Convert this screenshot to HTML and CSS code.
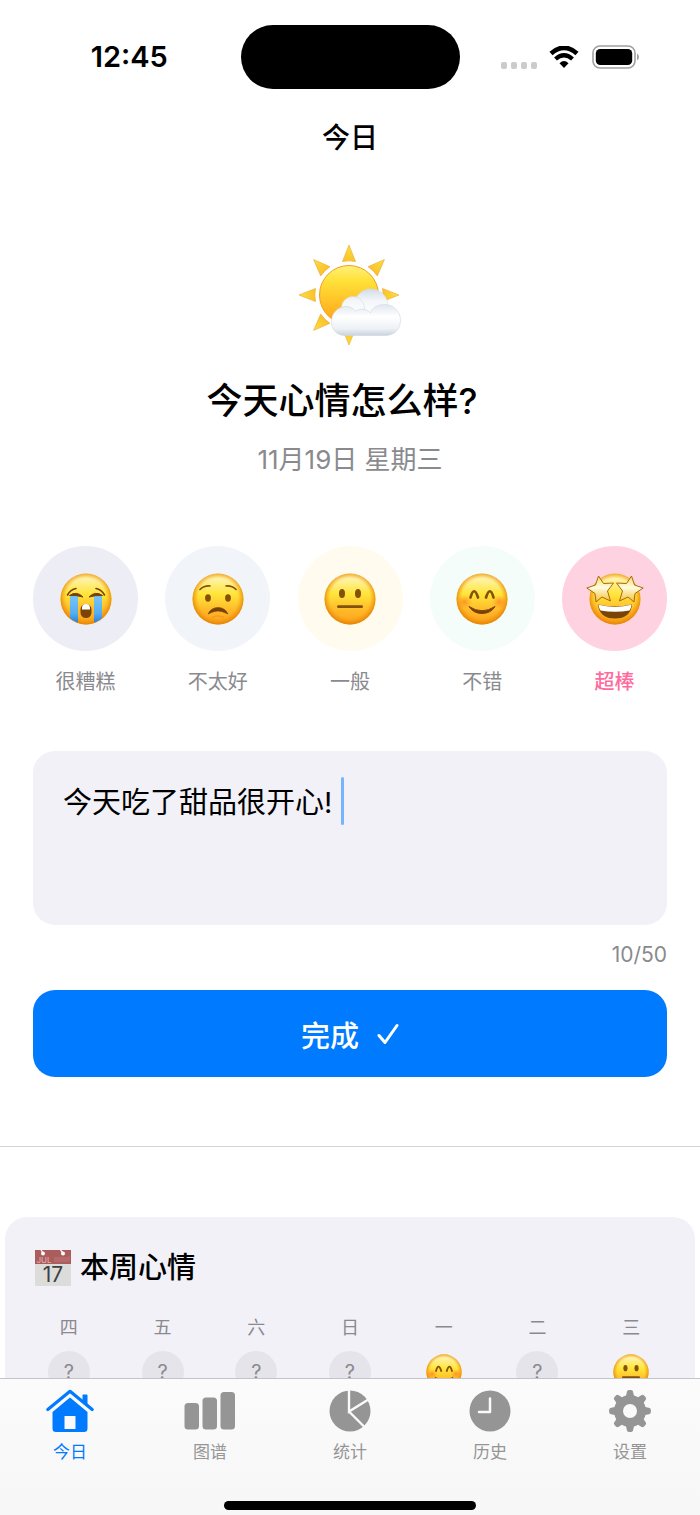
FILE: index.html
```html
<!DOCTYPE html>
<html lang="zh-CN">
<head>
<meta charset="utf-8">
<meta name="viewport" content="width=device-width, initial-scale=1">
<title>今日</title>
<link rel="stylesheet" href="styles.css">
</head>
<body>
<svg class="defs" width="0" height="0" aria-hidden="true">
  <defs>
    <linearGradient id="skin" x1="0" y1="0" x2="0" y2="1">
      <stop offset="0" stop-color="#ffe680"/><stop offset=".1" stop-color="#fff3a8"/><stop offset=".4" stop-color="#ffe53a"/><stop offset=".75" stop-color="#ffb627"/><stop offset="1" stop-color="#fba31c"/>
    </linearGradient>
    <radialGradient id="rim" cx=".5" cy=".48" r=".52">
      <stop offset=".74" stop-color="#f59a10" stop-opacity="0"/><stop offset="1" stop-color="#e38104" stop-opacity=".95"/>
    </radialGradient>
    <radialGradient id="cheek"><stop offset="0" stop-color="#ff6a1c" stop-opacity=".6"/><stop offset="1" stop-color="#ff7a1c" stop-opacity="0"/></radialGradient>
    <linearGradient id="tear" x1="0" y1="0" x2="0" y2="1"><stop offset="0" stop-color="#76c4f7"/><stop offset=".6" stop-color="#55aef0"/><stop offset="1" stop-color="#1d75d6"/></linearGradient>
    <linearGradient id="star" x1="0" y1="0" x2="0" y2="1"><stop offset="0" stop-color="#f6dc62"/><stop offset=".45" stop-color="#fffbe0"/><stop offset="1" stop-color="#f2c02e"/></linearGradient>
    <linearGradient id="sun" x1="0" y1="0" x2="0" y2="1"><stop offset="0" stop-color="#fff07a"/><stop offset=".25" stop-color="#ffe23a"/><stop offset="1" stop-color="#ff9f14"/></linearGradient>
    <linearGradient id="ray" gradientUnits="userSpaceOnUse" x1="51" y1="0" x2="51" y2="18"><stop offset="0" stop-color="#fbe23e"/><stop offset="1" stop-color="#fac02a"/></linearGradient>
    <linearGradient id="cloud" gradientUnits="userSpaceOnUse" x1="0" y1="62" x2="0" y2="92"><stop offset="0" stop-color="#e4eaf1"/><stop offset=".35" stop-color="#fff"/><stop offset=".75" stop-color="#eef2f6"/><stop offset="1" stop-color="#c6d0dc"/></linearGradient>
    <linearGradient id="cloud-back" gradientUnits="userSpaceOnUse" x1="0" y1="44" x2="0" y2="76"><stop offset="0" stop-color="#cfdae6"/><stop offset=".4" stop-color="#f4f7fa"/><stop offset="1" stop-color="#fff"/></linearGradient>
    <clipPath id="face-clip"><circle cx="26" cy="26" r="25"/></clipPath>
    <symbol id="face" viewBox="0 0 52 52"><circle cx="26" cy="26" r="25.500" fill="url(#skin)"/><circle cx="26" cy="26" r="25.500" fill="url(#rim)"/></symbol>
    <symbol id="cry" viewBox="0 0 52 52">
      <use href="#face"/>
      <g clip-path="url(#face-clip)"><path d="M10 23h8v29h-8zM34 23h8v29h-8z" fill="url(#tear)"/></g>
      <g fill="none" stroke="#79410a" stroke-linecap="round"><path d="M7.500 22Q10.500 16.500 16 15.500M44.500 22Q41.500 16.500 36 15.500" stroke-width="1.600"/></g>
      <path d="M9.500 22.500Q16.500 17.500 23 24Q16.500 22 9.500 22.500ZM42.500 22.500Q35.500 17.500 29 24Q35.500 22 42.500 22.500Z" fill="#79410a" stroke="#79410a" stroke-linejoin="round"/>
      <rect x="20.500" y="31" width="11" height="14" rx="5.500" fill="#7a4407"/><path d="M22 36.500V35a4 4 0 0 1 8 0v1.500z" fill="#fff"/>
    </symbol>
    <symbol id="worried" viewBox="0 0 52 52">
      <use href="#face"/>
      <ellipse cx="16" cy="25" rx="2.900" ry="3.700" fill="#855008"/><ellipse cx="36" cy="25" rx="2.900" ry="3.700" fill="#855008"/>
      <path d="M8 16.500Q12 12.500 18 13M44 16.500Q40 12.500 34 13" fill="none" stroke="#855008" stroke-width="1.700" stroke-linecap="round"/>
      <path d="M16 41Q19 34.500 26 34.500T36 41Q30 38 26 38T16 41Z" fill="#79410a" stroke="#79410a" stroke-width=".6" stroke-linejoin="round"/>
      <path d="M20 44.500Q26 41.500 32 44.500" fill="none" stroke="#f59a22" stroke-width="1.500"/>
    </symbol>
    <symbol id="neutral" viewBox="0 0 52 52">
      <use href="#face"/>
      <ellipse cx="18" cy="20.500" rx="3" ry="4.500" fill="#855008"/><ellipse cx="34" cy="20.500" rx="3" ry="4.500" fill="#855008"/>
      <rect x="13" y="32.300" width="26" height="2.800" rx="1.400" fill="#855008"/>
    </symbol>
    <symbol id="smile" viewBox="0 0 52 52">
      <use href="#face"/>
      <ellipse cx="8.500" cy="29" rx="8" ry="7" fill="url(#cheek)"/><ellipse cx="43.500" cy="29" rx="8" ry="7" fill="url(#cheek)"/>
      <path d="M14.500 24.500Q18 12 22 24.500M30 24.500Q34 12 37.500 24.500" fill="none" stroke="#855008" stroke-width="2.700" stroke-linecap="round"/>
      <path d="M13 33.500Q26 42 39 33.500Q34.500 40.500 26 40.500T13 33.500Z" fill="#79410a" stroke="#79410a" stroke-linejoin="round"/>
    </symbol>
    <symbol id="starry" viewBox="0 0 58 52">
      <use href="#face" x="3" width="52" height="52"/>
      <path d="M12 31.500Q29 35.500 46 31.500Q44.500 45.500 29 45.500T12 31.500Z" fill="#7a4407"/>
      <path d="M12.500 31.800Q29 36 45.500 31.800Q45 36 43.500 37.500Q29 40 14.500 37.500Q13 36 12.500 31.800Z" fill="#fff"/>
      <g fill="url(#star)" stroke="#a9690c" stroke-linejoin="round"><path d="M12.500 3L17.500 10.500L27.500 10L21.500 18L24.500 28L16 24L10 29L9 20.500L.8 15L9.500 12Z"/><path d="M45.500 3L40.500 10.500L30.500 10L36.500 18L33.500 28L42 24L48 29L49 20.500L57.200 15L48.500 12Z"/></g>
    </symbol>
    <path id="sunray" d="M51 1L57.500 17.500Q51 16.200 44.500 17.500Z" fill="url(#ray)" stroke="#eeb03a" stroke-width=".7" stroke-linejoin="round"/>
    <path id="tooth" d="M17.800 7.500L18.900 2.300Q19.100 1.200 20 1.200h2Q22.900 1.200 23.100 2.300L24.200 7.500Z" stroke-width="2.200" stroke-linejoin="round"/>
  </defs>
</svg>

<div class="app">
  <header class="top">
    <div class="status">
      <time class="clock">12:45</time>
      <div class="island"></div>
      <div class="signals">
        <span class="dots"><i></i><i></i><i></i><i></i></span>
        <svg class="wifi" viewBox="0 0 30 22" role="img" aria-label="Wi-Fi"><path d="M2 7.500Q15-4 28 7.500" fill="none" stroke="#000" stroke-width="4.600"/><path d="M6.500 13Q15 5.500 23.500 13" fill="none" stroke="#000" stroke-width="4.200"/><path d="M10.500 17.200Q15 13 19.500 17.200L15 22Z"/></svg>
        <svg class="battery" viewBox="0 0 48 24" role="img" aria-label="电量"><rect x="1" y="1" width="42" height="22" rx="7" fill="none" stroke="#a0a0a0" stroke-width="1.600"/><rect x="3.800" y="4" width="36.400" height="16" rx="4.500"/><path d="M45 8.500q2 1 2 3.500t-2 3.500z" fill="#a0a0a0"/></svg>
      </div>
    </div>
    <h1 class="title">今日</h1>
  </header>

  <main class="content">
    <section class="hero">
      <svg class="weather" viewBox="0 0 104 104" role="img" aria-label="晴间多云">
        <use href="#sunray"/><use href="#sunray" transform="rotate(45 51 51)"/><use href="#sunray" transform="rotate(90 51 51)"/><use href="#sunray" transform="rotate(180 51 51)"/><use href="#sunray" transform="rotate(225 51 51)"/><use href="#sunray" transform="rotate(270 51 51)"/><use href="#sunray" transform="rotate(315 51 51)"/>
        <circle cx="51" cy="51" r="29.500" fill="url(#sun)" stroke="#f0a01c"/>
        <g fill="url(#cloud-back)" stroke="#d3dce6" stroke-width=".6"><circle cx="73" cy="62" r="17"/><circle cx="55" cy="64" r="11.500"/></g>
        <path d="M47 91.500C38 91.500 33.500 85 33.500 77.500C33.500 69 40 62.500 48 62.500C52 62.500 55 64 57.500 67C63 64 69 65 72.500 69C74 63.500 80 60.500 86 60.500C96 60.500 102.500 67.500 102.500 76.500C102.500 85.500 96 91.500 87 91.500Z" fill="url(#cloud)" stroke="#cdd6e0" stroke-width=".6"/>
      </svg>
      <h2 class="question">今天心情怎么样?</h2>
      <p class="date">11月19日 星期三</p>
    </section>

    <section class="moods" aria-label="心情">
      <button class="mood" type="button"><span class="disc awful"><svg class="emoji"><use href="#cry"/></svg></span>很糟糕</button>
      <button class="mood" type="button"><span class="disc bad"><svg class="emoji"><use href="#worried"/></svg></span>不太好</button>
      <button class="mood" type="button"><span class="disc okay"><svg class="emoji"><use href="#neutral"/></svg></span>一般</button>
      <button class="mood" type="button"><span class="disc good"><svg class="emoji"><use href="#smile"/></svg></span>不错</button>
      <button class="mood selected" type="button" aria-pressed="true"><span class="disc great"><svg class="emoji wide"><use href="#starry"/></svg></span>超棒</button>
    </section>

    <form class="entry">
      <div class="note">
        <textarea class="note-text" aria-label="心情记录" maxlength="50">今天吃了甜品很开心!</textarea>
        <span class="caret" aria-hidden="true"></span>
      </div>
      <p class="counter">10/50</p>
      <button class="submit" type="button">完成
        <svg class="check" viewBox="0 0 22 22" aria-hidden="true"><path d="M2 12.500L8 19.500L20 2.500" fill="none" stroke="#fff" stroke-width="3" stroke-linecap="round" stroke-linejoin="round"/></svg>
      </button>
    </form>

    <section class="week">
      <h3 class="week-title">
        <svg class="calendar" viewBox="0 0 36 36" aria-hidden="true"><path d="M0 0h36v36H0z" fill="#dcdcdb"/><path d="M0 0h36v14H0z" fill="#ab5c5c"/><circle cx="8" cy="3.500" r="2" fill="#fff"/><circle cx="28" cy="3.500" r="2" fill="#fff"/><path d="M8 3L6 0M28 3L25.500 0" stroke="#fff" stroke-width="1.200"/><path d="M20 7v5M22 7v5M24 7v5M26 7v5M28 7v5M30 7v5M32 7v5M34 6v5" stroke="#c48584" stroke-width=".7"/><text class="cal-month" x="1.500" y="12.500">JUL</text><text class="cal-day" x="18" y="32">17</text></svg>
        本周心情
      </h3>
      <ol class="days">
        <li class="day">四<span class="blank">?</span></li>
        <li class="day">五<span class="blank">?</span></li>
        <li class="day">六<span class="blank">?</span></li>
        <li class="day">日<span class="blank">?</span></li>
        <li class="day">一<span class="logged"><svg class="mini"><use href="#smile"/></svg></span></li>
        <li class="day">二<span class="blank">?</span></li>
        <li class="day">三<span class="logged"><svg class="mini"><use href="#neutral"/></svg></span></li>
      </ol>
    </section>
  </main>

  <nav class="tabbar">
    <div class="tabs">
      <a class="tab active" href="#today" aria-current="page"><svg class="tab-icon" viewBox="0 0 48 44"><path d="M1.800 20.500L24 2.300L46.200 20.500" fill="none" stroke="currentColor" stroke-width="3.200" stroke-linecap="round" stroke-linejoin="round"/><path d="M37 5.500h3.500q1 0 1 1v10L36.500 12V6q0-.5.500-.5z"/><path fill-rule="evenodd" d="M24 8.500L41.500 23v16.500q0 3.500-3.500 3.500H10q-3.500 0-3.500-3.500V23zM18.500 27v13h11V27z"/></svg>今日</a>
      <a class="tab" href="#charts"><svg class="tab-icon" viewBox="0 0 52 44"><rect x=".5" y="14" width="14.500" height="26.500" rx="3.500"/><rect x="18.500" y="8.500" width="14.500" height="32" rx="3.500"/><rect x="36.500" y="3" width="14.500" height="37.500" rx="3.500"/></svg>图谱</a>
      <a class="tab" href="#stats"><svg class="tab-icon" viewBox="0 0 44 44"><circle cx="22" cy="22" r="20.500"/><path d="M21 0V22.500L42 9.500M21 22.500L37 38.500" fill="none" stroke="#fafafa" stroke-width="2.400"/></svg>统计</a>
      <a class="tab" href="#history"><svg class="tab-icon" viewBox="0 0 44 44"><circle cx="22" cy="22" r="20.500"/><path d="M22 9.500V23H11" fill="none" stroke="#fafafa" stroke-width="2.500" stroke-linecap="round" stroke-linejoin="round"/></svg>历史</a>
      <a class="tab" href="#settings"><svg class="tab-icon" viewBox="-1 -1 44 44"><g stroke="currentColor"><use href="#tooth"/><use href="#tooth" transform="rotate(45 21 21)"/><use href="#tooth" transform="rotate(90 21 21)"/><use href="#tooth" transform="rotate(135 21 21)"/><use href="#tooth" transform="rotate(180 21 21)"/><use href="#tooth" transform="rotate(225 21 21)"/><use href="#tooth" transform="rotate(270 21 21)"/><use href="#tooth" transform="rotate(315 21 21)"/></g><circle cx="21" cy="21" r="11.500" fill="none" stroke="currentColor" stroke-width="9"/></svg>设置</a>
    </div>
    <div class="home-indicator"></div>
  </nav>
</div>
</body>
</html>
```
FILE: styles.css
```css
* { box-sizing: border-box; }

body {
  margin: 0;
  background: #fff;
  color: #000;
  font-family: Inter, "Noto Sans CJK SC", sans-serif;
}

h1, h2, h3, p, ol { margin: 0; padding: 0; }
button, textarea { font: inherit; border: 0; padding: 0; background: none; }
svg { display: block; }
.defs { position: absolute; }

.app {
  display: flex;
  flex-direction: column;
  height: 100vh;
}

/* Status bar and title */
.status {
  display: grid;
  grid-template-columns: 1fr auto 1fr;
  align-items: center;
  padding-top: 25px;
}
.clock {
  justify-self: center;
  padding-left: 18px;
  font-size: 29px;
  font-weight: 600;
  line-height: 32px;
}
.island {
  width: 219px;
  height: 64px;
  border-radius: 32px;
  background: #000;
}
.signals {
  display: flex;
  align-items: center;
  justify-content: flex-end;
  padding-right: 60px;
}
.dots {
  display: flex;
  gap: 4px;
  padding-top: 16px;
}
.dots i {
  width: 6px;
  height: 7px;
  border-radius: 2px;
  background: #cbcbcb;
}
.wifi { width: 30px; height: 22px; margin: 0 13px 0 12px; }
.battery { width: 48px; height: 24px; }
.title {
  margin-top: 29px;
  text-align: center;
  font-size: 28px;
  font-weight: 500;
  line-height: 40px;
}

/* Scrolling content */
.content {
  flex: 1;
  min-height: 0;
  overflow-y: auto;
  scrollbar-width: none;
}
.hero {
  display: flex;
  flex-direction: column;
  align-items: center;
  padding-top: 86px;
}
.weather { width: 104px; height: 104px; }
.question {
  margin-top: 27px;
  padding-right: 16px;
  font-size: 36px;
  font-weight: 500;
  line-height: 52px;
}
.date {
  margin-top: 15px;
  color: #8a8a8e;
  font-size: 26px;
  line-height: 36px;
}

.moods {
  display: flex;
  justify-content: space-between;
  padding: 68px 33px 0;
}
.mood {
  display: flex;
  flex-direction: column;
  align-items: center;
  gap: 16px;
  color: #8a8a8e;
  font-size: 20px;
  line-height: 30px;
}
.mood.selected { color: #ff6b9d; font-weight: 500; }
.disc {
  display: grid;
  place-items: center;
  width: 105px;
  height: 105px;
  border-radius: 50%;
}
.awful { background: #ededf5; }
.bad { background: #f1f5fa; }
.okay { background: #fffbee; }
.good { background: #f5fdfb; }
.great { background: #ffd2e1; }
.emoji { width: 52px; height: 52px; }
.emoji.wide { width: 58px; }

.entry { padding: 54px 33px 0; }
.note { position: relative; }
.note-text {
  display: block;
  width: 100%;
  height: 174px;
  padding: 28px 30px;
  border-radius: 22px;
  background: #f2f1f8;
  color: #000;
  caret-color: transparent;
  font-size: 29px;
  line-height: 48px;
  outline: none;
  resize: none;
}
.caret {
  position: absolute;
  top: 26px;
  left: 308px;
  width: 3px;
  height: 48px;
  border-radius: 2px;
  background: #76b4fb;
}
.counter {
  margin-top: 14px;
  text-align: right;
  color: #8a8a8e;
  font-size: 21px;
  line-height: 32px;
}
.submit {
  display: flex;
  align-items: center;
  justify-content: center;
  gap: 18px;
  width: 100%;
  height: 87px;
  margin-top: 19px;
  border-radius: 22px;
  background: #007aff;
  color: #fff;
  font-size: 29px;
  font-weight: 500;
}
.check { width: 22px; height: 22px; }

.week {
  position: relative;
  margin: 140px 5px 0;
  padding: 30px 17px;
  border-radius: 22px;
  background: #f2f1f8;
}
.week::before {
  content: "";
  position: absolute;
  top: -71px;
  left: -5px;
  right: -5px;
  height: 1px;
  background: #d4d4d6;
}
.week-title {
  display: flex;
  align-items: center;
  gap: 9px;
  padding-left: 13px;
  font-size: 29px;
  font-weight: 500;
  line-height: 42px;
}
.calendar { width: 36px; height: 36px; }
.cal-month { fill: #dba9a8; font-size: 8px; }
.cal-day { fill: #404040; font-size: 21px; font-weight: 400; text-anchor: middle; }
.days {
  display: grid;
  grid-template-columns: repeat(7, 1fr);
  margin-top: 24px;
  list-style: none;
}
.day {
  display: flex;
  flex-direction: column;
  align-items: center;
  gap: 8px;
  color: #8a8a8e;
  font-size: 18px;
  line-height: 30px;
}
.blank, .logged {
  display: grid;
  place-items: center;
  width: 42px;
  height: 42px;
  border-radius: 50%;
}
.blank { background: #e5e4ea; font-size: 20px; }
.mini { width: 36px; height: 36px; }

/* Tab bar */
.tabbar {
  display: flex;
  flex-direction: column;
  align-items: center;
  justify-content: space-between;
  height: 137px;
  padding: 10px 0 5px;
  border-top: 1px solid #c4c4c8;
  background: linear-gradient(#fbfbfc, #f7f7f7);
}
.tabs {
  display: grid;
  grid-template-columns: repeat(5, 1fr);
  width: 100%;
}
.tab {
  display: flex;
  flex-direction: column;
  align-items: center;
  gap: 6px;
  color: #959595;
  font-size: 17px;
  line-height: 26px;
  text-decoration: none;
}
.tab.active { color: #007aff; }
.tab-icon { height: 44px; width: 52px; fill: currentColor; }
.home-indicator {
  width: 36%;
  height: 9px;
  border-radius: 5px;
  background: #000;
}
```
